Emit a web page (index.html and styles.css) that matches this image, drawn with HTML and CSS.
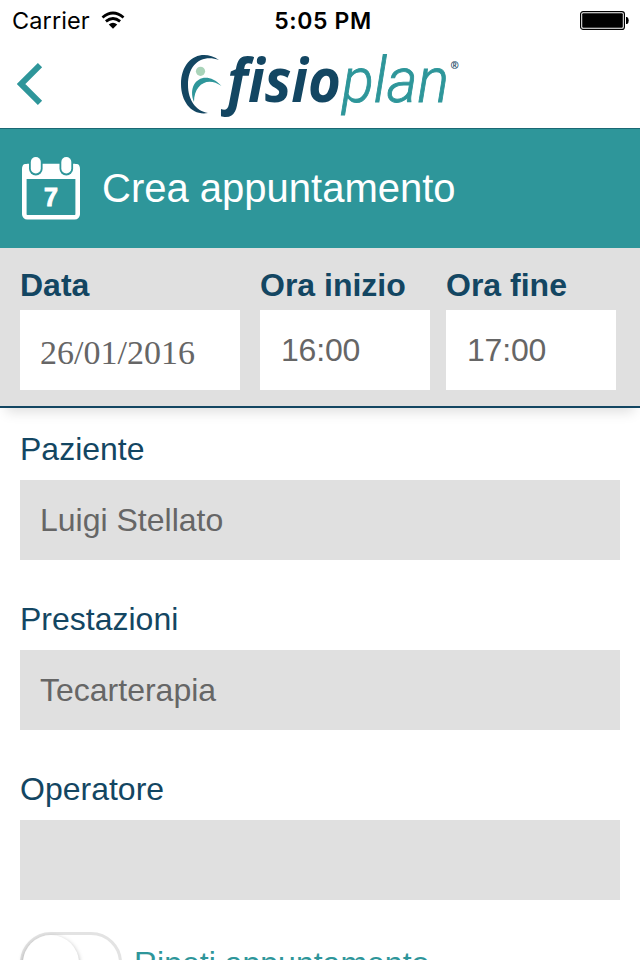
FILE: index.html
```html
<!DOCTYPE html>
<html lang="it">
<head>
    <meta charset="UTF-8">
    <meta name="viewport" content="width=device-width, initial-scale=1.0">
    <title>Fisioplan - Crea appuntamento</title>
    <link rel="stylesheet" href="styles.css">
</head>
<body>

    <!-- Barra di stato -->
    <div class="status-bar">
        <div class="carrier">
            <span class="carrier-name">Carrier</span>
            <svg width="24" height="19" viewBox="0 0 26 20">
                <path d="M1.6 6.7 Q13 -2.9 24.4 6.7" fill="none" stroke="#000" stroke-width="3"/>
                <path d="M5.3 11 Q13 4.6 20.7 11" fill="none" stroke="#000" stroke-width="3"/>
                <path d="M8.4 14.2 Q13 10.6 17.6 14.2 L13 19Z" fill="#000"/>
            </svg>
        </div>
        <span class="clock">5:05 PM</span>
        <svg class="battery" width="49" height="19" viewBox="0 0 49 19">
            <rect x="0.6" y="0.6" width="43.8" height="17.8" rx="2.5" fill="#fff" stroke="#000" stroke-width="1.2"/>
            <rect x="2.2" y="2.2" width="40.6" height="14.6" rx="1" fill="#000"/>
            <path d="M46 6h1.2q1.5 1 1.5 3.5T47.2 13H46Z" fill="#000"/>
        </svg>
    </div>

    <!-- Testata con logo -->
    <header class="header">
        <a class="back" href="#" aria-label="Indietro">
            <svg width="26" height="42" viewBox="0 0 26 42">
                <path d="M23 2.2 L4 21 L23 39.8" fill="none" stroke="#2e969a" stroke-width="6"/>
            </svg>
        </a>
        <svg class="logo" width="290" height="84" viewBox="0 0 290 84">
            <path d="M44 17 C27 5 6 15 6 41 C6 60 18 73 33 70 C21 68 13 57 13 42 C13 21 27 11 44 17Z" fill="#134662"/>
            <circle cx="25.5" cy="28.3" r="4.6" fill="#a9d3b9"/>
            <path d="M19 59 C11 39 30 25 46.5 43 C33 33 19 41 19 59Z" fill="#2e969a"/>
            <text class="logo-fisio" x="52" y="59" textLength="114" lengthAdjust="spacingAndGlyphs">fisio</text>
            <text class="logo-plan" x="167" y="59" textLength="107" lengthAdjust="spacingAndGlyphs">plan</text>
            <text class="logo-mark" x="275.5" y="26">®</text>
        </svg>
    </header>

    <div class="title-bar">
        <svg width="60" height="66" viewBox="0 0 60 66">
            <rect x="3.3" y="10" width="53.4" height="51.2" rx="3" fill="none" stroke="#fff" stroke-width="4.6"/>
            <rect x="1.5" y="8" width="57" height="15" rx="3" fill="#fff"/>
            <rect x="8" y="-1" width="13.6" height="20.5" rx="6.8" fill="#2e969a"/>
            <rect x="38.5" y="-1" width="13.6" height="20.5" rx="6.8" fill="#2e969a"/>
            <rect x="9.8" y="1" width="10" height="16.5" rx="5" fill="#fff"/>
            <rect x="40.3" y="1" width="10" height="16.5" rx="5" fill="#fff"/>
            <text class="day" x="30" y="50" text-anchor="middle">7</text>
        </svg>
        <h1>Crea appuntamento</h1>
    </div>

    <!-- Data e orari -->
    <div class="when">
        <div class="when-field when-date">
            <label for="data">Data</label>
            <input type="text" id="data" class="date-input" value="26/01/2016">
        </div>
        <div class="when-field">
            <label for="inizio">Ora inizio</label>
            <input type="text" id="inizio" class="time-input" value="16:00">
        </div>
        <div class="when-field">
            <label for="fine">Ora fine</label>
            <input type="text" id="fine" class="time-input" value="17:00">
        </div>
    </div>

    <div class="form">
        <div class="field">
            <label for="paziente">Paziente</label>
            <input type="text" id="paziente" value="Luigi Stellato">
        </div>
        <div class="field">
            <label for="prestazioni">Prestazioni</label>
            <input type="text" id="prestazioni" value="Tecarterapia">
        </div>
        <div class="field">
            <label for="operatore">Operatore</label>
            <input type="text" id="operatore">
        </div>
        <div class="repeat">
            <span class="switch"><span class="knob"></span></span>
            <span>Ripeti appuntamento</span>
        </div>
    </div>

</body>
</html>
```
FILE: styles.css
```css
* {
    box-sizing: border-box;
}
body {
    margin: 0;
    height: 960px;
    overflow: hidden;
    background: #fff;
    font-family: "Liberation Sans", Arial, sans-serif;
    font-size: 32px;
}
svg {
    display: block;
}
.status-bar {
    display: grid;
    grid-template-columns: 1fr auto 1fr;
    align-items: center;
    height: 40px;
    padding: 0 11px 0 12px;
    font-family: Inter, sans-serif;
}
.carrier {
    display: flex;
    align-items: center;
    gap: 11px;
}
.carrier-name {
    font-size: 23.5px;
    letter-spacing: 0.1px;
}
.clock {
    font-weight: 600;
    font-size: 23px;
    letter-spacing: 0.6px;
    padding: 2px 0 0 5px;
}
.battery {
    justify-self: end;
    margin-top: 1px;
}
.header {
    display: flex;
    height: 88px;
    padding-left: 17px;
}
.back {
    margin-top: 23px;
    width: 26px;
}
.logo {
    margin: 3px 0 0 132px;
    overflow: visible;
}
.logo-fisio {
    font-family: "Open Sans", sans-serif;
    font-style: italic;
    font-size: 60px;
    font-weight: 700;
    fill: #134662;
}
.logo-plan {
    font-family: Roboto, sans-serif;
    font-style: italic;
    font-size: 62px;
    font-weight: 300;
    fill: #2e969a;
    stroke: #2e969a;
    stroke-width: 0.9px;
}
.logo-mark {
    font-family: "Open Sans", sans-serif;
    font-size: 10px;
    font-weight: 700;
    fill: #134662;
}
.title-bar {
    display: flex;
    align-items: center;
    gap: 21px;
    height: 120px;
    padding-left: 21px;
    border-top: 1px solid #1b6874;
    background: #2e969a;
    color: #fff;
}
.title-bar h1 {
    margin: 0;
    font-size: 40px;
    font-weight: normal;
}
.day {
    font-size: 25px;
    font-weight: bold;
    fill: #fff;
    stroke: #fff;
    stroke-width: 1px;
}
.when {
    display: flex;
    gap: 16px;
    height: 160px;
    padding: 18px 20px 0;
    background: #e0e0e0;
    border-bottom: 2px solid #134662;
    box-shadow: 0 10px 12px -6px rgba(0,0,0,0.13);
}
.when-field {
    width: 170px;
}
.when-date {
    width: 220px;
    margin-right: 4px;
}
label {
    display: block;
    color: #134662;
    line-height: 38px;
}
.when label {
    font-weight: bold;
    margin-bottom: 6px;
}
input {
    display: block;
    width: 100%;
    height: 80px;
    padding: 0 20px;
    border: 0;
    border-radius: 0;
    background: #e0e0e0;
    color: #666;
    font-family: inherit;
    font-size: 32px;
}
.when input {
    background: #fff;
}
.when .date-input {
    padding-top: 5px;
    font-family: "Liberation Serif", "Times New Roman", serif;
    font-size: 34px;
}
.when .time-input {
    padding-left: 21px;
    letter-spacing: -0.2px;
}
.form {
    padding: 22px 20px 0;
}
.field {
    margin-bottom: 40px;
}
.field label {
    margin-bottom: 12px;
}
.repeat {
    display: flex;
    align-items: center;
    gap: 12px;
    height: 62px;
    margin-top: -8px;
    color: #2e969a;
}
.switch {
    width: 102px;
    height: 62px;
    border: 3px solid #e3e3e3;
    border-radius: 31px;
}
.knob {
    display: block;
    width: 56px;
    height: 56px;
    border-radius: 50%;
    background: #fff;
    box-shadow: 0 2px 5px rgba(0,0,0,0.35);
}
```
